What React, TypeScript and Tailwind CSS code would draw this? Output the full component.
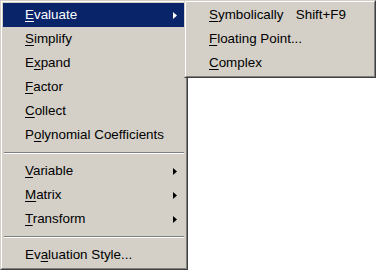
import React from 'react';

type Item = { pre: string; key: string; post: string; arrow?: boolean; shortcut?: string; active?: boolean };

const MAIN: (Item | 'sep')[] = [
  { pre: '', key: 'E', post: 'valuate', arrow: true, active: true },
  { pre: '', key: 'S', post: 'implify' },
  { pre: 'E', key: 'x', post: 'pand' },
  { pre: '', key: 'F', post: 'actor' },
  { pre: '', key: 'C', post: 'ollect' },
  { pre: 'P', key: 'o', post: 'lynomial Coefficients' },
  'sep',
  { pre: '', key: 'V', post: 'ariable', arrow: true },
  { pre: '', key: 'M', post: 'atrix', arrow: true },
  { pre: '', key: 'T', post: 'ransform', arrow: true },
  'sep',
  { pre: 'Ev', key: 'a', post: 'luation Style...' },
];

const SUB: Item[] = [
  { pre: '', key: 'S', post: 'ymbolically', shortcut: 'Shift+F9' },
  { pre: '', key: 'F', post: 'loating Point...' },
  { pre: '', key: 'C', post: 'omplex' },
];

const Arrow: React.FC<{ white?: boolean }> = ({ white }) => (
  <svg width="4" height="7" viewBox="0 0 4 7" className="shrink-0">
    <path d="M0 0 L4 3.5 L0 7 Z" fill={white ? '#ffffff' : '#000000'} />
  </svg>
);

const Row: React.FC<{ item: Item }> = ({ item }) => (
  <div
    className={`flex items-center h-[24px] pl-[22px] pr-[8px] ${
      item.active ? 'bg-[#0a246a] text-white' : 'text-black'
    }`}
  >
    <span className="flex-1 whitespace-nowrap">
      {item.pre}
      <u className="underline-offset-[2px]">{item.key}</u>
      {item.post}
    </span>
    {item.shortcut && <span className="mr-[19px] whitespace-nowrap">{item.shortcut}</span>}
    {item.arrow && <Arrow white={item.active} />}
  </div>
);

const Separator = () => (
  <div className="h-[12px] flex flex-col justify-center px-[1px]">
    <div className="h-[1px] bg-[#808080]" />
    <div className="h-[1px] bg-white" />
  </div>
);

// classic 3d raised frame
const Frame: React.FC<{ className?: string; children: React.ReactNode }> = ({ className, children }) => (
  <div className={`border border-[#d4d0c8] border-r-[#404040] border-b-[#404040] bg-[#d4d0c8] ${className ?? ''}`}>
    <div className="border border-white border-r-[#808080] border-b-[#808080] p-[1px] h-full">{children}</div>
  </div>
);

export default function App() {
  return (
    <div
      className="w-[376px] h-[270px] bg-white flex items-start overflow-hidden text-[13.4px]"
      style={{ fontFamily: '"Liberation Sans", Arial, sans-serif' }}
    >
      <Frame className="w-[188px] h-[270px] shrink-0">
        {MAIN.map((it, i) => (it === 'sep' ? <Separator key={i} /> : <Row key={i} item={it} />))}
      </Frame>
      <Frame className="relative z-10 ml-[-4px] w-[192px] h-[78px] shrink-0">
        {SUB.map((it, i) => (
          <Row key={i} item={it} />
        ))}
      </Frame>
    </div>
  );
}
